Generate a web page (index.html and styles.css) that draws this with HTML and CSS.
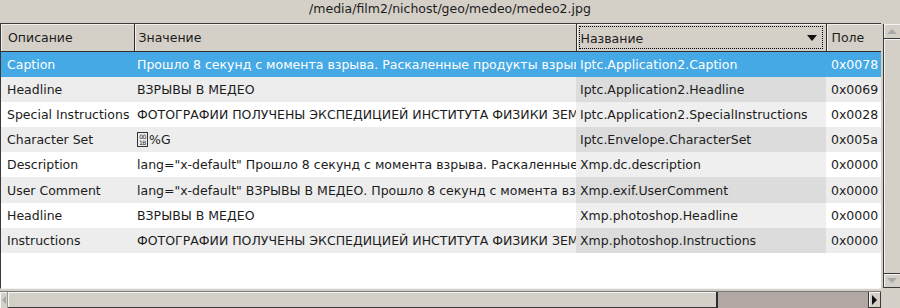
FILE: index.html
```html
<!DOCTYPE html>
<html lang="ru">
<head>
    <meta charset="UTF-8">
    <title>medeo2.jpg</title>
    <link rel="stylesheet" href="styles.css">
</head>
<body>
    <div class="window">
        <div class="title">/media/film2/nichost/geo/medeo/medeo2.jpg</div>
        <div class="main">
            <div class="frame">
                <table class="grid">
                    <colgroup>
                        <col class="c-desc">
                        <col class="c-value">
                        <col class="c-name">
                        <col class="c-field">
                    </colgroup>
                    <thead>
                        <tr>
                            <th class="col-desc"><div class="head">Описание</div></th>
                            <th><div class="head">Значение</div></th>
                            <th class="focus"><div class="head"><div class="focus-box">Название<span class="arrow"></span></div></div></th>
                            <th class="col-field"><div class="head">Поле</div></th>
                        </tr>
                    </thead>
                    <tbody>
                        <tr class="selected">
                            <td class="col-desc">Caption</td>
                            <td>Прошло 8 секунд с момента взрыва. Раскаленные продукты взрыва поднимаются вверх</td>
                            <td class="sorted">Iptc.Application2.Caption</td>
                            <td class="col-field">0x0078</td>
                        </tr>
                        <tr class="odd">
                            <td class="col-desc">Headline</td>
                            <td>ВЗРЫВЫ В МЕДЕО</td>
                            <td class="sorted">Iptc.Application2.Headline</td>
                            <td class="col-field">0x0069</td>
                        </tr>
                        <tr>
                            <td class="col-desc">Special Instructions</td>
                            <td>ФОТОГРАФИИ ПОЛУЧЕНЫ ЭКСПЕДИЦИЕЙ ИНСТИТУТА ФИЗИКИ ЗЕМЛИ</td>
                            <td class="sorted">Iptc.Application2.SpecialInstructions</td>
                            <td class="col-field">0x0028</td>
                        </tr>
                        <tr class="odd">
                            <td class="col-desc">Character Set</td>
                            <td><span class="hexbox"><span>00</span><span>1B</span></span>%G</td>
                            <td class="sorted">Iptc.Envelope.CharacterSet</td>
                            <td class="col-field">0x005a</td>
                        </tr>
                        <tr>
                            <td class="col-desc">Description</td>
                            <td>lang="x-default" Прошло 8 секунд с момента взрыва. Раскаленные продукты</td>
                            <td class="sorted">Xmp.dc.description</td>
                            <td class="col-field">0x0000</td>
                        </tr>
                        <tr class="odd">
                            <td class="col-desc">User Comment</td>
                            <td>lang="x-default" ВЗРЫВЫ В МЕДЕО. Прошло 8 секунд с момента взрыва</td>
                            <td class="sorted">Xmp.exif.UserComment</td>
                            <td class="col-field">0x0000</td>
                        </tr>
                        <tr>
                            <td class="col-desc">Headline</td>
                            <td>ВЗРЫВЫ В МЕДЕО</td>
                            <td class="sorted">Xmp.photoshop.Headline</td>
                            <td class="col-field">0x0000</td>
                        </tr>
                        <tr class="odd">
                            <td class="col-desc">Instructions</td>
                            <td>ФОТОГРАФИИ ПОЛУЧЕНЫ ЭКСПЕДИЦИЕЙ ИНСТИТУТА ФИЗИКИ ЗЕМЛИ</td>
                            <td class="sorted">Xmp.photoshop.Instructions</td>
                            <td class="col-field">0x0000</td>
                        </tr>
                    </tbody>
                </table>
            </div>
            <div class="vscroll">
                <div class="vbtn up"><span class="tri-up"></span></div>
                <div class="vthumb"></div>
                <div class="vbtn down"><span class="tri-down"></span></div>
            </div>
        </div>
        <div class="hscroll">
            <div class="hbtn left"><span class="tri-left"></span></div>
            <div class="hthumb"></div>
            <div class="htrough"></div>
            <div class="hbtn right"><span class="tri-right"></span></div>
        </div>
    </div>
</body>
</html>
```

FILE: styles.css
```css
* {
    box-sizing: border-box;
}
body {
    margin: 0;
    padding: 0;
    background-color: #d4d0c8;
    font-family: "DejaVu Sans", Verdana, sans-serif;
    font-size: 12.5px;
    color: #1c1c1c;
}
.window {
    width: 900px;
    height: 308px;
    display: flex;
    flex-direction: column;
    background-color: #d4d0c8;
    overflow: hidden;
}
.title {
    height: 23px;
    line-height: 18px;
    text-align: center;
}
.main {
    height: 266px;
    display: flex;
    gap: 2px;
}
.frame {
    width: 881px;
    height: 266px;
    border-top: 1px solid #3a3a3a;
    border-left: 1px solid #3a3a3a;
    border-bottom: 1px solid #f4f4f4;
    background-color: #ffffff;
    overflow: hidden;
}
.grid {
    width: 880px;
    table-layout: fixed;
    border-collapse: collapse;
}
.c-desc { width: 133px; }
.c-value { width: 442px; }
.c-name { width: 250px; }
.c-field { width: 55px; }
.grid th {
    padding: 0;
    background-color: #d4d0c8;
    border-right: 1px solid #2e2e2e;
    border-bottom: 1px solid #2e2e2e;
    box-shadow: inset 1px 1px 0 #f2f0ec;
    font-weight: normal;
    text-align: left;
    white-space: nowrap;
    overflow: hidden;
}
.head {
    height: 27px;
    line-height: 28px;
    padding-left: 4px;
    overflow: hidden;
}
.grid th.col-desc .head { padding-left: 7px; }
.grid th.col-field { border-right: none; }
.grid th.col-field .head { padding-left: 5px; }
.grid th.focus .head {
    padding: 2px 3px 2px 2px;
    line-height: normal;
}
.focus-box {
    height: 23px;
    border: 1px dotted #000000;
    padding-left: 1px;
    padding-top: 1px;
    display: flex;
    justify-content: space-between;
    align-items: center;
}
.arrow {
    width: 0;
    height: 0;
    margin-right: 5px;
    border-left: 5px solid transparent;
    border-right: 5px solid transparent;
    border-top: 6px solid #111111;
}
.grid td {
    height: 25.2px;
    padding: 0 0 0 3px;
    white-space: nowrap;
    overflow: hidden;
}
.grid td.col-desc { padding-left: 6px; }
.grid td.col-field { padding-left: 5px; }
.grid td.sorted {
    padding-left: 4px;
    background-color: #efefef;
}
.grid tr.odd td { background-color: #ededed; }
.grid tr.odd td.sorted { background-color: #dcdcdc; }
.grid tr.selected td {
    background-color: #45a9e6;
    color: #ffffff;
}
.hexbox {
    display: inline-flex;
    flex-direction: column;
    justify-content: center;
    vertical-align: middle;
    width: 11px;
    height: 15px;
    margin-top: -2px;
    margin-right: 1px;
    border: 1px solid #333333;
    font-size: 6px;
    line-height: 6px;
    letter-spacing: -0.5px;
    text-align: center;
}
.vscroll {
    width: 17px;
    height: 264px;
    margin-top: 1px;
    display: flex;
    flex-direction: column;
    border-left: 1px solid #3a3a3a;
}
.vbtn {
    height: 15px;
    display: flex;
    align-items: center;
    justify-content: center;
    border-bottom: 1px solid #3a3a3a;
    box-shadow: inset 1px 1px 0 #f4f4f4;
}
.vbtn.down {
    border-top: 1px solid #3a3a3a;
    border-bottom: 1px solid #3a3a3a;
}
.vthumb {
    flex-grow: 1;
    box-shadow: inset 1px 1px 0 #f4f4f4;
}
.tri-up {
    border-left: 5px solid transparent;
    border-right: 5px solid transparent;
    border-bottom: 5px solid #a8a8a8;
}
.tri-down {
    border-left: 5px solid transparent;
    border-right: 5px solid transparent;
    border-top: 5px solid #a8a8a8;
}
.hscroll {
    width: 881px;
    height: 17px;
    margin-top: 2px;
    display: flex;
    border-top: 1px solid #7a7a7a;
}
.hbtn {
    display: flex;
    align-items: center;
    justify-content: center;
    box-shadow: inset 1px 1px 0 #f4f4f4;
}
.hbtn.left {
    width: 8px;
    border-right: 1px solid #9a9a9a;
}
.hbtn.right {
    width: 13px;
    border-left: 1px solid #3a3a3a;
    border-right: 1px solid #3a3a3a;
    border-bottom: 1px solid #3a3a3a;
}
.hthumb {
    width: 710px;
    border-right: 2px solid #2e2e2e;
    border-bottom: 1px solid #3a3a3a;
    box-shadow: inset 1px 1px 0 #f4f4f4;
}
.htrough {
    flex-grow: 1;
    background-color: #b1a8a4;
}
.tri-left {
    border-top: 4px solid transparent;
    border-bottom: 4px solid transparent;
    border-right: 4px solid #a8a8a8;
}
.tri-right {
    border-top: 5px solid transparent;
    border-bottom: 5px solid transparent;
    border-left: 5px solid #111111;
}
```
